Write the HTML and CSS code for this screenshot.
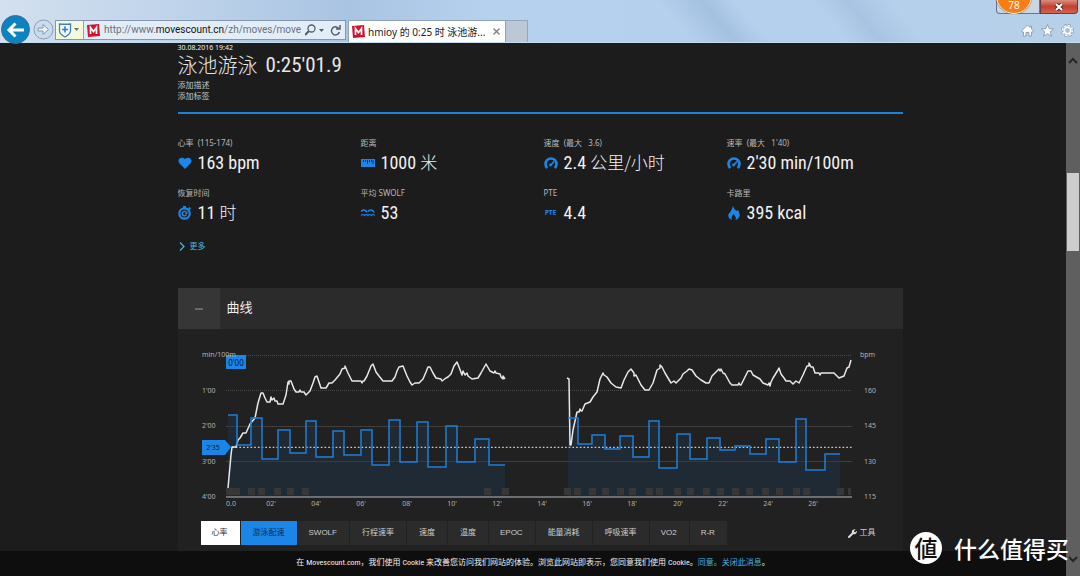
FILE: index.html
```html
<!DOCTYPE html>
<html lang="zh-CN">
<head>
<meta charset="utf-8">
<meta name="viewport" content="width=device-width, initial-scale=1">
<title>hmioy 的 0:25 时 泳池游泳</title>
<link rel="stylesheet" href="styles.css">
</head>
<body>
<header class="chrome">
  <div class="window-controls">
    <span class="win-mid"></span>
    <button class="win-close" aria-label="Close"><svg width="10" height="8" viewBox="0 0 10 8"><path d="M2 1l6 6M8 1L2 7" stroke="#55282a" stroke-width="4"/><path d="M2 1l6 6M8 1L2 7" stroke="#fff" stroke-width="2"/></svg></button>
    <span class="badge">78</span>
  </div>
  <div class="toolbar">
    <button class="back" aria-label="Back"><svg width="29" height="29" viewBox="0 0 29 29"><circle cx="14.500" cy="14.500" r="14" fill="#0b83c0" stroke="#3b6f94"/><path d="M8 15h15M14.500 8.500L8 15l6.500 6.500" fill="none" stroke="#fff" stroke-width="3"/></svg></button>
    <button class="forward" aria-label="Forward"><svg width="21" height="21" viewBox="0 0 21 21"><circle cx="10.500" cy="10.500" r="9.500" fill="#c9dcef" stroke="#8d9eb2"/><path d="M5 9h5V5.500l5.500 5-5.500 5V12H5z" fill="#e9f2fa" stroke="#8598ae"/></svg></button>
    <div class="address">
      <button class="shield" aria-label="Security"><svg width="24" height="16" viewBox="0 0 24 16"><path d="M1.500 2q5 .5 11 0v7q0 3-5.500 6-5.500-3-5.500-6z" fill="#f4f9ff" stroke="#3b82cc" stroke-width="1.300"/><path d="M7 4.500v6M4 7.500h6" stroke="#2c7cd3" stroke-width="1.600"/><path d="M16 6h5l-2.500 3z" fill="#6c7280"/></svg></button>
      <svg class="favicon" width="13" height="13" viewBox="0 0 13 13"><path d="M0 1L12 0l1 12-12 1z" fill="#d5102c"/><path d="M3.500 10V3.500l3 4 3-4V10" fill="none" stroke="#fff" stroke-width="1.700"/></svg>
      <span class="url">http://www.<b>movescount.cn</b>/zh/moves/move</span>
      <button class="addr-btn" aria-label="Search"><svg width="36" height="12" viewBox="0 0 36 12"><circle cx="6.500" cy="4.500" r="3.500" fill="none" stroke="#555f6c" stroke-width="1.300"/><path d="M4 7L0 11" stroke="#555f6c" stroke-width="2"/><path d="M14 5h5l-2.500 3z" fill="#555f6c"/><path d="M34 5a4 4 0 1 0 .3 3M35 1v4h-4" fill="none" stroke="#555f6c" stroke-width="1.500"/></svg></button>
    </div>
    <div class="tab">
      <svg class="favicon" width="13" height="13" viewBox="0 0 13 13"><path d="M0 1L12 0l1 12-12 1z" fill="#d5102c"/><path d="M3.500 10V3.500l3 4 3-4V10" fill="none" stroke="#fff" stroke-width="1.700"/></svg>
      <span class="tab-title">hmioy 的 0:25 时 泳池游...</span>
      <button class="tab-close" aria-label="Close tab"><svg width="7" height="7" viewBox="0 0 7 7"><path d="M.5.5l6 6M6.500.5l-6 6" stroke="#7d7d7d" stroke-width="1.300"/></svg></button>
    </div>
    <button class="new-tab" aria-label="New tab"></button>
    <div class="tools">
      <button aria-label="Home"><svg width="13" height="13" viewBox="0 0 13 13"><path d="M6.500 1L1 6.500V8h1.500v4H5V8.500h3V12h2.500V8H12V6.500L10.500 5V2H9v1.500z" fill="#fff" stroke="#8292a5" stroke-width=".8"/></svg></button>
      <button aria-label="Favorites"><svg width="13" height="13" viewBox="0 0 13 13"><path d="M6.500.5l1.700 4.200 4.400.2-3.400 2.900 1.200 4.400-3.900-2.500-3.900 2.500 1.200-4.400L.4 4.900l4.400-.2z" fill="#fff" stroke="#8292a5" stroke-width=".8"/></svg></button>
      <button aria-label="Settings"><svg width="13" height="13" viewBox="0 0 13 13"><circle cx="6.500" cy="6.500" r="5" fill="none" stroke="#8292a5" stroke-width="3" stroke-dasharray="2.400 1.527"/><circle cx="6.500" cy="6.500" r="4.500" fill="#8292a5"/><circle cx="6.500" cy="6.500" r="5" fill="none" stroke="#fff" stroke-width="1.600" stroke-dasharray="2 1.927"/><circle cx="6.500" cy="6.500" r="3.300" fill="#a8bed7" stroke="#fff" stroke-width="1.800"/></svg></button>
    </div>
  </div>
</header>
<div class="view">
  <div class="page">
    <main class="content">
      <section class="intro">
        <time class="date">30.08.2016 19:42</time>
        <h1 class="title">泳池游泳 <span class="cond">0:25'01.9</span></h1>
        <a class="edit" href="#">添加描述</a>
        <a class="edit" href="#">添加标签</a>
      </section>
      <section class="stats">
        <div class="stat"><div class="label">心率&nbsp; (115-174)</div><div class="value"><svg width="14" height="14" viewBox="0 0 14 14"><path d="M7 13L1.300 7.200C-1.400 3.500 3-.4 7 3c4-3.400 8.400.5 5.700 4.200z" fill="#1c86e8"/></svg><span>163 bpm</span></div></div>
        <div class="stat"><div class="label">距离</div><div class="value"><svg width="14" height="14" viewBox="0 0 14 14"><path d="M0 3h14v8H0z" fill="#1c86e8"/><path d="M2.500 4v2M4.500 4v2M6.500 4v4M8.500 4v2M10.500 4v2M12 4v4" stroke="#17355a"/></svg><span>1000 <i>米</i></span></div></div>
        <div class="stat"><div class="label">速度&nbsp; (最大&nbsp;&nbsp; 3.6)</div><div class="value"><svg width="14" height="14" viewBox="0 0 14 14"><path d="M3.300 12A5.500 5.500 0 1 1 10.700 12" fill="none" stroke="#1c86e8" stroke-width="2.600"/><path d="M6.500 9.500L10 5.500" stroke="#1c86e8" stroke-width="1.600"/><circle cx="6.500" cy="9" r="1.400" fill="#1c86e8"/></svg><span>2.4 <i>公里/小时</i></span></div></div>
        <div class="stat"><div class="label">速率&nbsp; (最大&nbsp;&nbsp; 1'40)</div><div class="value"><svg width="14" height="14" viewBox="0 0 14 14"><path d="M3.300 12A5.500 5.500 0 1 1 10.700 12" fill="none" stroke="#1c86e8" stroke-width="2.600"/><path d="M6.500 9.500L10 5.500" stroke="#1c86e8" stroke-width="1.600"/><circle cx="6.500" cy="9" r="1.400" fill="#1c86e8"/></svg><span>2'30 min/100m</span></div></div>
        <div class="stat"><div class="label">恢复时间</div><div class="value"><svg width="14" height="14" viewBox="0 0 14 14"><circle cx="6.500" cy="7.500" r="5.200" fill="none" stroke="#1c86e8" stroke-width="2.200"/><path d="M5 0h3v3H5zM10 2l2-1 1 2-2 1z" fill="#1c86e8"/><path d="M8.500 8.700A2.300 2.300 0 1 1 8.300 6" fill="none" stroke="#1c86e8" stroke-width="1.500"/><path d="M9.500 5v3h-3z" fill="#1c86e8"/></svg><span>11 <i>时</i></span></div></div>
        <div class="stat"><div class="label">平均 SWOLF</div><div class="value"><svg width="14" height="14" viewBox="0 0 14 14"><path d="M0 5.500q1-1.500 3-1.500t3 2.500M7 5.500q1-1.500 3-1.500t3 2.500" fill="none" stroke="#1c86e8" stroke-width="1.700"/><path d="M0 9.500q1.750-2 3.500 0 1.750-2 3.500 0 1.750-2 3.500 0 1.750-2 3.500 0" fill="none" stroke="#1c86e8" stroke-width="1.200"/></svg><span>53</span></div></div>
        <div class="stat"><div class="label">PTE</div><div class="value"><b class="pte">PTE</b><span>4.4</span></div></div>
        <div class="stat"><div class="label">卡路里</div><div class="value"><svg width="14" height="14" viewBox="0 0 14 14"><path d="M6 0q.5 2.500 3.500 5L11 4q3 5 .5 8-1 1.500-3 2 1-2-.5-4L6.500 8Q3.500 11.500 5 14 .5 12.500 1.500 8 4 6 6 0z" fill="#1c86e8"/></svg><span>395 kcal</span></div></div>
      </section>
      <a class="more" href="#"><svg width="6" height="9" viewBox="0 0 6 9"><path d="M1 .5l4 4-4 4" fill="none" stroke="#4ab0de" stroke-width="1.300"/></svg>更多</a>
      <section class="panel">
        <div class="panel-head">
          <button class="collapse" aria-label="Collapse"><svg width="8" height="2" viewBox="0 0 8 2"><path d="M0 1h8" stroke="#999"/></svg></button>
          <h2>曲线</h2>
        </div>
        <svg class="chart" viewBox="178 329 725 180" role="img" aria-label="曲线">
          <g stroke="#484848" stroke-dasharray="1 1"><path d="M226 355.500h626M226 390.500h626M226 426.500h626M226 461.500h626"/></g>
          <g fill="#1f2a35">
            <path d="M228 497V415H237V445H251V418H262V459H278V430H290V453H306V421H316V457H333V431H344V455H361V430H372V465H389V420H400V462H417V422H428V467H446V426H457V462H475V439H489V465H505V497z"/>
            <path d="M568 497V418H578V444H592V435H605V449H620V436H633V457H649V421H659V468H677V434H690V459H707V438H720V450H735V446H750V454H766V439H779V462H796V419H806V470H825V454H840V497z"/>
          </g>
          <g stroke="#484848" stroke-opacity=".55"><path d="M226 426.500h626M226 461.500h626"/></g>
          <g fill="#373737">
            <path d="M226 488h7v7h-7zM233 488h7v7h-7zM248 488h7v7h-7zM258 488h7v7h-7zM274 488h7v7h-7zM287 488h7v7h-7zM302 488h7v7h-7zM484 488h7v7h-7zM502 488h7v7h-7zM564 488h7v7h-7zM574 488h7v7h-7zM589 488h7v7h-7zM602 488h7v7h-7zM617 488h7v7h-7zM629 488h7v7h-7zM646 488h7v7h-7zM656 488h7v7h-7zM674 488h7v7h-7zM687 488h7v7h-7zM703 488h7v7h-7zM717 488h7v7h-7zM732 488h7v7h-7zM746 488h7v7h-7zM762 488h7v7h-7zM776 488h7v7h-7zM793 488h7v7h-7zM803 488h7v7h-7zM837 488h7v7h-7zM848 488h3v7h-3z"/>
          </g>
          <path d="M226 497h626" stroke="#85898c" stroke-width="1.500"/>
          <path d="M232 447.300h620" stroke="#c8c8c8" stroke-width="1.200" stroke-dasharray="1.700 2"/>
          <g fill="none" stroke="#e8e8e8" stroke-width="1.500" stroke-linejoin="round">
            <polyline points="228,488 231,455 232,447 236,447 238,440 240,438 243,433 246,433 250,424 255,418 258,403 261,393 263,393 265,398 267,402 270,402 271,397 272,400 274,398 275,401 277,401 278,404 283,404 286,395 288,382 289,384 289,381 291,381 294,389 296,392 299,392 300,390 301,392 304,392 306,395 310,391 313,383 315,377 317,376 319,382 321,388 326,388 329,383 332,383 335,380 340,374 342,369 345,368 345,366 348,373 352,381 361,381 362,383 363,381 364,381 367,376 371,366 373,364 376,372 379,376 383,381 392,381 395,377 397,371 399,367 403,366 407,376 410,382 412,385 415,383 419,383 423,379 426,372 428,367 430,367 433,373 436,378 441,379 442,381 446,378 448,377 451,374 454,366 457,362 459,367 462,375 463,371 465,375 467,373 468,376 472,379 478,378 481,373 486,364 490,371 494,373 495,371 496,373 500,374 501,377 503,379 503,376 505,379"/>
            <polyline points="567,378 569,379 570,445 571,445 573,430 577,412 579,412 580,409 581,411 582,411 585,404 590,402 593,397 597,392 600,379 603,373 604,375 607,377 611,383 616,387 621,388 624,380 628,372 631,369 634,373 634,376 636,375 641,385 645,390 649,390 653,383 657,370 660,368 660,365 662,367 665,373 671,383 674,381 676,383 677,382 681,378 683,374 687,371 689,369 692,370 696,376 701,380 706,383 709,383 712,376 717,371 719,369 720,371 721,369 723,373 725,374 730,383 732,385 738,385 739,383 740,385 741,385 745,377 748,371 751,371 753,375 760,379 763,383 768,385 769,383 770,386 771,382 773,378 778,370 779,368 781,374 784,378 786,381 790,381 793,384 796,381 799,383 803,375 807,366 809,366 809,363 811,367 813,367 815,373 819,373 820,375 821,373 834,373 839,378 844,376 847,368 849,367 851,360"/>
          </g>
          <g fill="none" stroke="#1c7fd8" stroke-width="1.500">
            <path d="M228 415H237V445H251V418H262V459H278V430H290V453H306V421H316V457H333V431H344V455H361V430H372V465H389V420H400V462H417V422H428V467H446V426H457V462H475V439H489V465H505"/>
            <path d="M568 418H578V444H592V435H605V449H620V436H633V457H649V421H659V468H677V434H690V459H707V438H720V450H735V446H750V454H766V439H779V462H796V419H806V470H825V454H840"/>
          </g>
          <path d="M226 355h20v14h-20z" fill="#1c86e8"/>
          <path d="M202 440h23l6 7-6 8h-23z" fill="#1c86e8"/>
          <g class="axis">
            <text x="202" y="357">min/100m</text><text x="202" y="393">1'00</text><text x="202" y="428">2'00</text><text x="202" y="464">3'00</text><text x="202" y="499">4'00</text>
            <text x="860" y="357">bpm</text><text x="864" y="393">160</text><text x="864" y="428">145</text><text x="864" y="464">130</text><text x="864" y="499">115</text>
          </g>
          <g class="axis mid">
            <text x="231" y="506">0.0</text><text x="271" y="506">02'</text><text x="316" y="506">04'</text><text x="361" y="506">06'</text><text x="407" y="506">08'</text><text x="452" y="506">10'</text><text x="497" y="506">12'</text><text x="542" y="506">14'</text><text x="587" y="506">16'</text><text x="632" y="506">18'</text><text x="678" y="506">20'</text><text x="723" y="506">22'</text><text x="768" y="506">24'</text><text x="813" y="506">26'</text>
          </g>
          <text class="tag" x="236" y="366">0'00</text><text class="tag small" x="213" y="450">2'35</text>
        </svg>
        <div class="series">
          <button class="on-white">心率</button><button class="on-blue">游泳配速</button><button class="latin">SWOLF</button><button>行程速率</button><button>速度</button><button>温度</button><button class="latin">EPOC</button><button>能量消耗</button><button>呼吸速率</button><button class="latin">VO2</button><button class="latin">R-R</button>
          <button class="wrench"><svg width="9" height="9" viewBox="0 0 9 9"><path d="M1 8l4-4" stroke="#ddd" stroke-width="2" stroke-linecap="round"/><path d="M7.500.5L6 2l.3 1L7.300 3.200 8.700 1.700Q9.300 4 7.500 5 5 6 4 4 3.300 1.500 5 .7 6.500 0 7.500.5z" fill="#ddd"/></svg>工具</button>
        </div>
      </section>
    </main>
    <div class="cookie">在 Movescount.com，我们使用 Cookie 来改善您访问我们网站的体验。浏览此网站即表示，您同意我们使用 Cookie。<a href="#">同意。关闭此消息</a>。</div>
  </div>
  <div class="scrollbar">
    <svg width="10" height="7" viewBox="0 0 10 7"><path d="M1 6l4-4 4 4" fill="none" stroke="#262626" stroke-width="2"/></svg>
    <span class="thumb"></span>
    <svg width="10" height="7" viewBox="0 0 10 7"><path d="M1 1l4 4 4-4" fill="none" stroke="#262626" stroke-width="2"/></svg>
  </div>
</div>
<div class="watermark"><span class="seal">値</span>什么值得买</div>
</body>
</html>
```
FILE: styles.css
```css
* { box-sizing: border-box; }
body {
  margin: 0;
  height: 100vh;
  display: flex;
  flex-direction: column;
  overflow: hidden;
  position: relative;
  background: #1c1c1c;
  color: #eee;
  font: 8px/10px "Noto Sans", "Noto Sans CJK SC", sans-serif;
}
button { margin: 0; padding: 0; border: 0; background: none; color: inherit; font: inherit; display: flex; align-items: center; justify-content: center; }
a { text-decoration: none; color: inherit; }
h1, h2 { margin: 0; font-weight: 400; }
svg { flex: none; display: block; }

.chrome {
  flex: none;
  height: 43px;
  padding-top: 15px;
  position: relative;
  background:
    linear-gradient(50deg, transparent 62%, #a5c1e0 66%, transparent 69%, transparent 76%, #a8c4e2 79%, transparent 83%),
    linear-gradient(90deg, #d3e0ef 0, #bdd2ea 18%, #a9c4e2 32%, #b5d1ee 45%, #b4d0ed 70%, #b7d0ea 100%);
  border-bottom: 1px solid #c3dced;
}
.toolbar { display: flex; align-items: center; padding: 0 6px 0 1px; height: 28px; }
.back { margin-right: 3px; }
.forward { margin-right: 1px; }
.address { display: flex; align-items: center; width: 291px; height: 20px; margin-top: 2px; background: #e3edf8; border: 1px solid #8397b0; }
.shield { width: 28px; height: 18px; background: #f3f9d9; border-right: 1px solid #9aa97a; }
.favicon { margin-left: 3px; }
.url { flex: 1; margin-left: 4px; font: 10px/16px Roboto, sans-serif; color: #6b7178; white-space: nowrap; }
.url b { font-weight: 400; color: #111; }
.addr-btn { margin-right: 4px; }
.tab { display: flex; align-items: center; width: 158px; height: 22px; margin: 4px 0 0 2px; background: #fff; border: 1px solid #8fa4bb; border-bottom: 0; padding-right: 5px; color: #222; }
.tab-title { flex: 1; margin-left: 3px; font: 10px/16px "Noto Sans", "Noto Sans CJK SC", sans-serif; white-space: nowrap; }
.new-tab { width: 22px; height: 22px; margin-top: 4px; background: #bcc8d6; border: 1px solid #93a6bc; border-left: 0; border-bottom: 0; }
.tools { display: flex; gap: 7px; margin-left: auto; margin-top: 3px; }
.window-controls { position: absolute; top: 0; right: 2px; display: flex; height: 14px; }
.win-mid { width: 44px; background: #c9d6e4; border: 1px solid #65758a; border-top: 0; border-radius: 0 0 0 4px; }
.win-close { width: 38px; background: linear-gradient(#d98e80, #c2402f 50%, #d36450); border: 1px solid #6c3a3c; border-top: 0; border-radius: 0 0 4px 0; }
.badge { position: absolute; left: 0; top: -22px; width: 36px; height: 36px; padding-top: 21px; border-radius: 50%; background: #f57f17; border: 1px solid #fff3e2; box-shadow: 0 0 1px #713c0c; color: #fff; font: 10px/11px "Open Sans", sans-serif; text-align: center; }

.view { flex: 1; min-height: 0; display: flex; }
.page { flex: 1; min-width: 0; padding-left: 14px; display: flex; flex-direction: column; position: relative; }
.content { width: 100%; max-width: 725px; margin: 0 auto; }
.intro { display: flex; flex-direction: column; border-bottom: 2px solid #1b82d9; height: 71px; }
.date { font-size: 7px; line-height: 9px; }
.title { font: 300 20px/26px "Noto Sans CJK SC", sans-serif; height: 27px; color: #e6e6e6; display: flex; gap: 8px; }
.cond, .value { font-family: "Roboto Condensed", "Liberation Sans Narrow", "Noto Sans CJK SC", sans-serif; }
.cond { font-size: 21px; font-weight: 400; }
.edit { line-height: 11px; color: #c4c4c4; }

.stats { display: grid; grid-template-columns: repeat(4, 183px); row-gap: 7px; height: 93px; margin-top: 23px; }
.label { font-size: 8px; line-height: 12px; color: #b8b8b8; white-space: nowrap; }
.value { display: flex; align-items: center; gap: 6px; height: 28px; margin-bottom: 3px; font-size: 18px; line-height: 28px; color: #f2f2f2; white-space: nowrap; }
.value i { font: 300 17px/26px "Noto Sans CJK SC", sans-serif; }
.pte { width: 14px; font-size: 7px; text-align: center; color: #1c86e8; }
.more { display: flex; align-items: center; gap: 5px; margin: 10px 0 0 1px; height: 12px; color: #4ab0de; }

.panel { margin-top: 36px; background: #212121; }
.panel-head { display: flex; height: 41px; background: #2b2b2b; }
.collapse { width: 42px; background: #363636; }
.panel-head h2 { margin-left: 7px; font: 13px/38px "Noto Sans CJK SC", sans-serif; }
.chart { width: 100%; height: auto; }
.axis { font: 7px "Noto Sans", sans-serif; fill: #b0b0b0; }
.mid, .tag { text-anchor: middle; }
.tag { font: 8px "Noto Sans", sans-serif; fill: #08182a; }
.small { font-size: 7px; }
.series { display: flex; gap: 1px; padding: 12px 27px 7px 23px; }
.series button { height: 24px; padding: 0 12px; background: #2b2b2b; color: #ccc; font-family: "Liberation Sans", "Noto Sans CJK SC", sans-serif; white-space: nowrap; }
.series .latin { padding: 0 12px 0 11px; }
.series .on-white { background: #fff; color: #333; padding: 0 12px 0 11px; }
.series .on-blue { background: #1c86e8; color: #0c2c50; }
.series .wrench { margin-left: auto; padding: 0; background: none; gap: 3px; }
.cookie { position: absolute; left: 0; right: 0; bottom: 0; height: 25px; font-family: "Roboto Condensed", "Noto Sans CJK SC", sans-serif; line-height: 24px; background: #0e0e0e; color: #eee; text-align: center; white-space: nowrap; }
.cookie a { color: #4ab0de; }
.scrollbar { width: 14px; background: #5f5f5f; display: flex; flex-direction: column; align-items: center; padding: 14px 0 13px; }
.thumb { width: 12px; height: 78px; margin: 109px 0 auto; background: #cdcdcd; }
.watermark { position: absolute; right: 11px; bottom: 12px; display: flex; align-items: center; gap: 12px; font: 500 23px/32px "Noto Sans CJK SC", sans-serif; color: #fff; white-space: nowrap; }
.seal { width: 32px; height: 32px; border-radius: 50%; background: #fff; color: #111; font-size: 23px; line-height: 30px; text-align: center; }
```
